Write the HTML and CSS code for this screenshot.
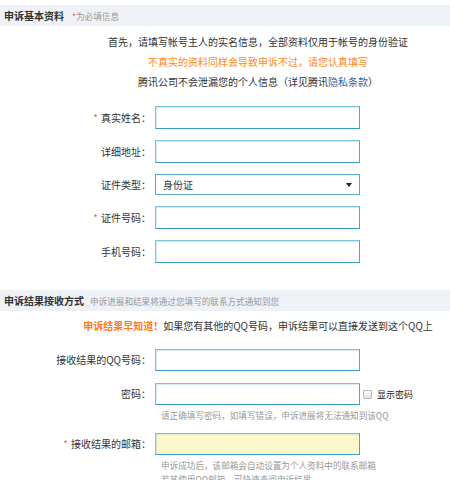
FILE: index.html
```html
<!DOCTYPE html>
<html lang="zh-CN">
<head>
<meta charset="utf-8">
<title>申诉</title>
<link rel="stylesheet" href="styles.css">
</head>
<body>
<div class="sec-head sec-first">
  <h2 class="sec-title">申诉基本资料</h2>
  <span class="sec-note"><em class="req">*</em>为必填信息</span>
</div>
<div class="intro">
  <p>首先，请填写帐号主人的实名信息，全部资料仅用于帐号的身份验证</p>
  <p class="warn">不真实的资料同样会导致申诉不过，请您认真填写</p>
  <p>腾讯公司不会泄漏您的个人信息（详见腾讯<a class="link" href="#">隐私条款</a>）</p>
</div>
<div class="form form-basic">
  <div class="row">
    <label class="lbl"><em class="req req-l">*</em>真实姓名：</label>
    <input class="inp" type="text">
  </div>
  <div class="row">
    <label class="lbl">详细地址：</label>
    <input class="inp" type="text">
  </div>
  <div class="row">
    <label class="lbl">证件类型：</label>
    <div class="sel"><span class="sel-val">身份证</span></div>
  </div>
  <div class="row">
    <label class="lbl"><em class="req req-l">*</em>证件号码：</label>
    <input class="inp" type="text">
  </div>
  <div class="row">
    <label class="lbl">手机号码：</label>
    <input class="inp" type="text">
  </div>
</div>
<div class="sec-head sec-second">
  <h2 class="sec-title">申诉结果接收方式</h2>
  <span class="sec-sub">申诉进展和结果将通过您填写的联系方式通知到您</span>
</div>
<div class="intro intro-2">
  <p><strong class="hl">申诉结果早知道！</strong>如果您有其他的QQ号码，申诉结果可以直接发送到这个QQ上</p>
</div>
<div class="form form-result">
  <div class="row">
    <label class="lbl">接收结果的QQ号码：</label>
    <input class="inp" type="text">
  </div>
  <div class="row row-pw">
    <label class="lbl">密码：</label>
    <input class="inp" type="password">
    <span class="show-pw"><span class="cb"></span>显示密码</span>
  </div>
  <div class="hint">请正确填写密码，如填写错误，申诉进展将无法通知到该QQ</div>
  <div class="row row-mail">
    <label class="lbl"><em class="req req-l">*</em>接收结果的邮箱：</label>
    <input class="inp inp-mail" type="text">
  </div>
  <div class="hint">申诉成功后，该邮箱会自动设置为个人资料中的联系邮箱<br>若其使用QQ邮箱，可快速查阅申诉结果</div>
</div>
</body>
</html>
```

FILE: styles.css
```css
* { box-sizing: border-box; }
html, body { margin: 0; padding: 0; background: #fff; }
body {
  font-family: "Noto Sans CJK SC", "Noto Sans", sans-serif;
  font-size: 10px;
  color: #333;
  width: 450px;
  height: 480px;
  overflow: hidden;
}
p { margin: 0; }
em { font-style: normal; }

.sec-head {
  height: 21px;
  background: #eef2f6;
  display: flex;
  align-items: center;
  padding-left: 4px;
}
.sec-first { margin-top: 5px; gap: 8px; }
.sec-second { margin-top: 27px; gap: 6px; }
.sec-title {
  margin: 0;
  font-size: 10px;
  font-weight: bold;
  color: #333;
  line-height: 21px;
}
.sec-note, .sec-sub {
  font-size: 8.6px;
  color: #999;
}
.req { color: #f55; }
.req-l { margin-right: 3px; }

.intro {
  margin-top: 6px;
  padding-left: 66px;
  text-align: center;
  line-height: 20px;
}
.intro-2 { margin-top: 5px; }
.warn { color: #ff8a22; }
.link { color: #2a6aa8; text-decoration: none; }
.hl { color: #ff7b1a; font-weight: bold; }

.form { display: flex; flex-direction: column; }
.form-basic { margin-top: 14px; gap: 11px; }
.form-result { margin-top: 13px; }

.row {
  display: grid;
  grid-template-columns: 151px 205px 1fr;
  column-gap: 4px;
  align-items: center;
}
.form-result .row-pw { margin-top: 12px; }
.form-result .row-mail { margin-top: 11px; }

.lbl {
  text-align: right;
  white-space: nowrap;
  line-height: 14px;
}

.inp {
  height: 23px;
  width: 205px;
  margin: 0;
  padding: 0 4px;
  border: 1px solid #7cc3d6;
  border-bottom-color: #3a9dbf;
  border-right-color: #4aa7c6;
  background: #fff;
  font: inherit;
  box-shadow: inset 1px 1px 1px rgba(160, 205, 220, 0.45);
  outline: none;
}
.form-result .inp { height: 22px; }
.inp-mail { background: #fdf8cc; }

.sel {
  position: relative;
  height: 21px;
  width: 205px;
  border: 1px solid #5aa8c3;
  display: flex;
  align-items: center;
  padding-left: 7px;
}
.sel::after {
  content: "";
  position: absolute;
  right: 7px;
  top: 8px;
  border-left: 3px solid transparent;
  border-right: 3px solid transparent;
  border-top: 4px solid #222;
}

.show-pw {
  display: flex;
  align-items: center;
  gap: 5px;
  font-size: 9px;
  color: #222;
  margin-left: -1px;
}
.cb {
  display: inline-block;
  width: 9px;
  height: 9px;
  border: 1px solid #bbb;
  background: linear-gradient(#fafafa, #e4e4e4);
  border-radius: 1px;
}

.hint {
  margin-left: 161px;
  margin-top: 3px;
  font-size: 8.6px;
  color: #999;
  line-height: 14px;
}
```
